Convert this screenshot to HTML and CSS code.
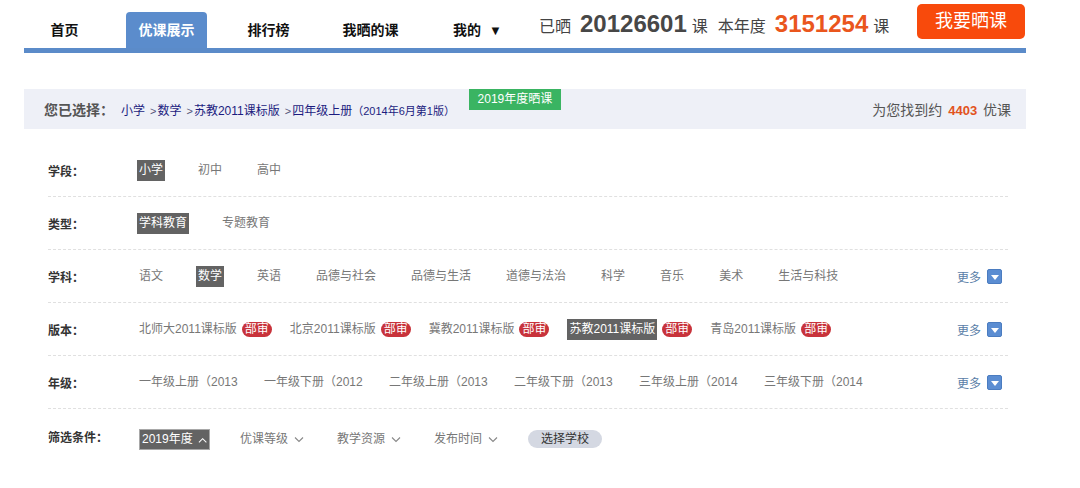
FILE: index.html
```html
<!DOCTYPE html>
<html lang="zh-CN">
<head>
  <meta charset="UTF-8" />
  <title>优课展示</title>
  <link rel="stylesheet" href="styles.css">
</head>
<body>
<div class="page">

  <div class="header">
    <ul class="nav">
      <li>首页</li>
      <li class="active">优课展示</li>
      <li>排行榜</li>
      <li>我晒的课</li>
      <li>我的 <span class="caret">▼</span></li>
    </ul>
    <div class="stats">
      <span>已晒</span><b class="num">20126601</b><span>课</span>
      <span class="year">本年度</span><b class="num orange">3151254</b><span>课</span>
    </div>
    <a class="share-btn" href="#">我要晒课</a>
  </div>

  <div class="chosen">
    <span class="chosen-label">您已选择：</span>
    <span class="crumbs">
      <a href="#">小学</a>
      <a href="#"><i>&gt;</i>数学</a>
      <a href="#"><i>&gt;</i>苏教2011课标版</a>
      <a href="#"><i>&gt;</i>四年级上册<small>（2014年6月第1版）</small></a>
    </span>
    <span class="year-tag">2019年度晒课</span>
    <span class="found">为您找到约 <b>4403</b> 优课</span>
  </div>

  <div class="filters">
    <div class="row">
      <span class="label">学段：</span>
      <div class="opts">
        <a class="opt on">小学</a>
        <a class="opt">初中</a>
        <a class="opt">高中</a>
      </div>
    </div>

    <div class="row">
      <span class="label">类型：</span>
      <div class="opts">
        <a class="opt on">学科教育</a>
        <a class="opt">专题教育</a>
      </div>
    </div>

    <div class="row">
      <span class="label">学科：</span>
      <div class="opts">
        <a class="opt">语文</a>
        <a class="opt on">数学</a>
        <a class="opt">英语</a>
        <a class="opt">品德与社会</a>
        <a class="opt">品德与生活</a>
        <a class="opt">道德与法治</a>
        <a class="opt">科学</a>
        <a class="opt">音乐</a>
        <a class="opt">美术</a>
        <a class="opt">生活与科技</a>
      </div>
      <a class="more">更多 <span class="more-ico"></span></a>
    </div>

    <div class="row">
      <span class="label">版本：</span>
      <div class="opts versions">
        <a class="opt">北师大2011课标版</a><span class="badge">部审</span>
        <a class="opt">北京2011课标版</a><span class="badge">部审</span>
        <a class="opt">冀教2011课标版</a><span class="badge">部审</span>
        <a class="opt on">苏教2011课标版</a><span class="badge">部审</span>
        <a class="opt">青岛2011课标版</a><span class="badge">部审</span>
      </div>
      <a class="more">更多 <span class="more-ico"></span></a>
    </div>

    <div class="row">
      <span class="label">年级：</span>
      <div class="opts grades">
        <a class="opt">一年级上册（2013</a>
        <a class="opt">一年级下册（2012</a>
        <a class="opt">二年级上册（2013</a>
        <a class="opt">二年级下册（2013</a>
        <a class="opt">三年级上册（2014</a>
        <a class="opt">三年级下册（2014</a>
      </div>
      <a class="more">更多 <span class="more-ico"></span></a>
    </div>

    <div class="row last">
      <span class="label">筛选条件：</span>
      <div class="opts conds">
        <a class="drop on">2019年度 <svg width="10" height="6" viewBox="0 0 10 6"><path d="M1 5.5 5 1.5 9 5.5" fill="none" stroke="#fff" stroke-width="1.1"/></svg></a>
        <a class="drop">优课等级 <svg width="10" height="6" viewBox="0 0 10 6"><path d="M1 .5 5 4.5 9 .5" fill="none" stroke="#888" stroke-width="1.1"/></svg></a>
        <a class="drop">教学资源 <svg width="10" height="6" viewBox="0 0 10 6"><path d="M1 .5 5 4.5 9 .5" fill="none" stroke="#888" stroke-width="1.1"/></svg></a>
        <a class="drop">发布时间 <svg width="10" height="6" viewBox="0 0 10 6"><path d="M1 .5 5 4.5 9 .5" fill="none" stroke="#888" stroke-width="1.1"/></svg></a>
        <a class="school">选择学校</a>
      </div>
    </div>
  </div>

</div>
</body>
</html>
```

FILE: styles.css
```css
* {
  box-sizing: border-box;
  margin: 0;
  padding: 0;
}

body {
  font-family: "Liberation Sans", "Noto Sans CJK SC", sans-serif;
  background: #fff;
  color: #333;
}

a {
  text-decoration: none;
  color: inherit;
}

.page {
  width: 1002px;
  margin-left: 24px;
}

/* header */

.header {
  display: flex;
  align-items: flex-end;
  height: 53px;
  border-bottom: 5px solid #5b8bc9;
}

.nav {
  display: flex;
  gap: 21px;
  list-style: none;
}

.nav li {
  width: 81px;
  height: 36px;
  line-height: 36px;
  text-align: center;
  font-size: 14px;
  font-weight: bold;
  color: #111;
  border-radius: 4px 4px 0 0;
}

.nav li:last-child {
  padding-left: 10px;
}

.nav li.active {
  background: #5b8ccc;
  color: #fff;
}

.nav .caret {
  font-size: 13px;
  margin-left: 4px;
}

.stats {
  align-self: center;
  display: flex;
  align-items: baseline;
  margin-left: 26px;
  font-size: 16px;
  color: #444;
}

.stats .num {
  font-size: 24px;
  margin: 0 5px 0 9px;
  color: #474747;
}

.stats .num.orange {
  color: #ea561d;
}

.stats .year {
  margin-left: 10px;
}

.share-btn {
  align-self: flex-start;
  margin: 4px 1px 0 auto;
  width: 108px;
  height: 35px;
  line-height: 35px;
  text-align: center;
  font-size: 18px;
  color: #fff;
  background: #f84a0c;
  border-radius: 5px;
}

/* chosen bar */

.chosen {
  display: flex;
  align-items: center;
  height: 40px;
  margin-top: 36px;
  padding: 0 15px 0 20px;
  background: #eef0f7;
}

.chosen-label {
  font-size: 14px;
  font-weight: bold;
  color: #555;
  margin-right: 7px;
}

.crumbs {
  display: flex;
  gap: 5px;
  font-size: 12px;
  color: #1c1c80;
}

.crumbs i {
  font-style: normal;
  font-size: 11px;
  margin-right: 1px;
  color: #55557a;
}

.crumbs small {
  font-size: 11px;
}

.year-tag {
  align-self: flex-start;
  margin-left: 14px;
  width: 92px;
  height: 21px;
  line-height: 21px;
  text-align: center;
  font-size: 12px;
  color: #fff;
  background: #3ab462;
}

.found {
  margin-left: auto;
  font-size: 14px;
  color: #555;
}

.found b {
  font-size: 13px;
  color: #e25320;
  margin: 0 2px;
}

/* filters */

.filters {
  margin-top: 15px;
  padding: 0 18px 0 24px;
}

.row {
  display: flex;
  align-items: center;
  height: 53px;
  border-bottom: 1px dashed #e0e0e0;
}

.row.last {
  border-bottom: none;
  height: 60px;
}

.label {
  width: 91px;
  flex-shrink: 0;
  font-size: 12px;
  font-weight: bold;
  color: #333;
}

.row.last .label {
  margin-bottom: 6px;
}

.opts {
  display: flex;
  align-items: center;
  font-size: 12px;
  color: #777;
}

.opt {
  line-height: 17px;
  margin-right: 35px;
  white-space: nowrap;
}

.opt.on {
  padding: 2px;
  margin-left: -2px;
  margin-right: 33px;
  background: #636363;
  color: #fff;
}

.versions .opt,
.versions .opt.on {
  margin: 0;
}

.badge {
  margin: 0 18px 0 5px;
  padding: 0 3px;
  line-height: 15px;
  border-radius: 8px;
  font-size: 12px;
  color: #fff;
  background: #c8333b;
}

.grades .opt {
  width: 97px;
  margin-right: 28px;
}

.more {
  margin-left: auto;
  margin-right: 6px;
  display: flex;
  align-items: center;
  font-size: 12px;
  color: #5a80a8;
}

.more-ico {
  position: relative;
  width: 15px;
  height: 15px;
  margin-left: 6px;
  background: #5b8dd2;
  border: 1px solid #4b7cc0;
  border-radius: 2px;
}

.more-ico::after {
  content: "";
  position: absolute;
  left: 3px;
  top: 5px;
  border-left: 4px solid transparent;
  border-right: 4px solid transparent;
  border-top: 5px solid #fff;
}

.drop {
  display: flex;
  align-items: center;
  gap: 6px;
  margin-right: 33px;
  line-height: 17px;
  white-space: nowrap;
}

.drop svg {
  margin-top: 1px;
}

.drop.on {
  width: 71px;
  height: 21px;
  padding: 0 2px;
  gap: 5px;
  margin-right: 30px;
  background: #636363;
  border: 1px solid #a8a8a8;
  color: #fff;
}

.school {
  width: 74px;
  height: 18px;
  line-height: 18px;
  margin-left: -3px;
  text-align: center;
  border-radius: 9px;
  background: #d4d8e2;
  color: #333;
}
```
